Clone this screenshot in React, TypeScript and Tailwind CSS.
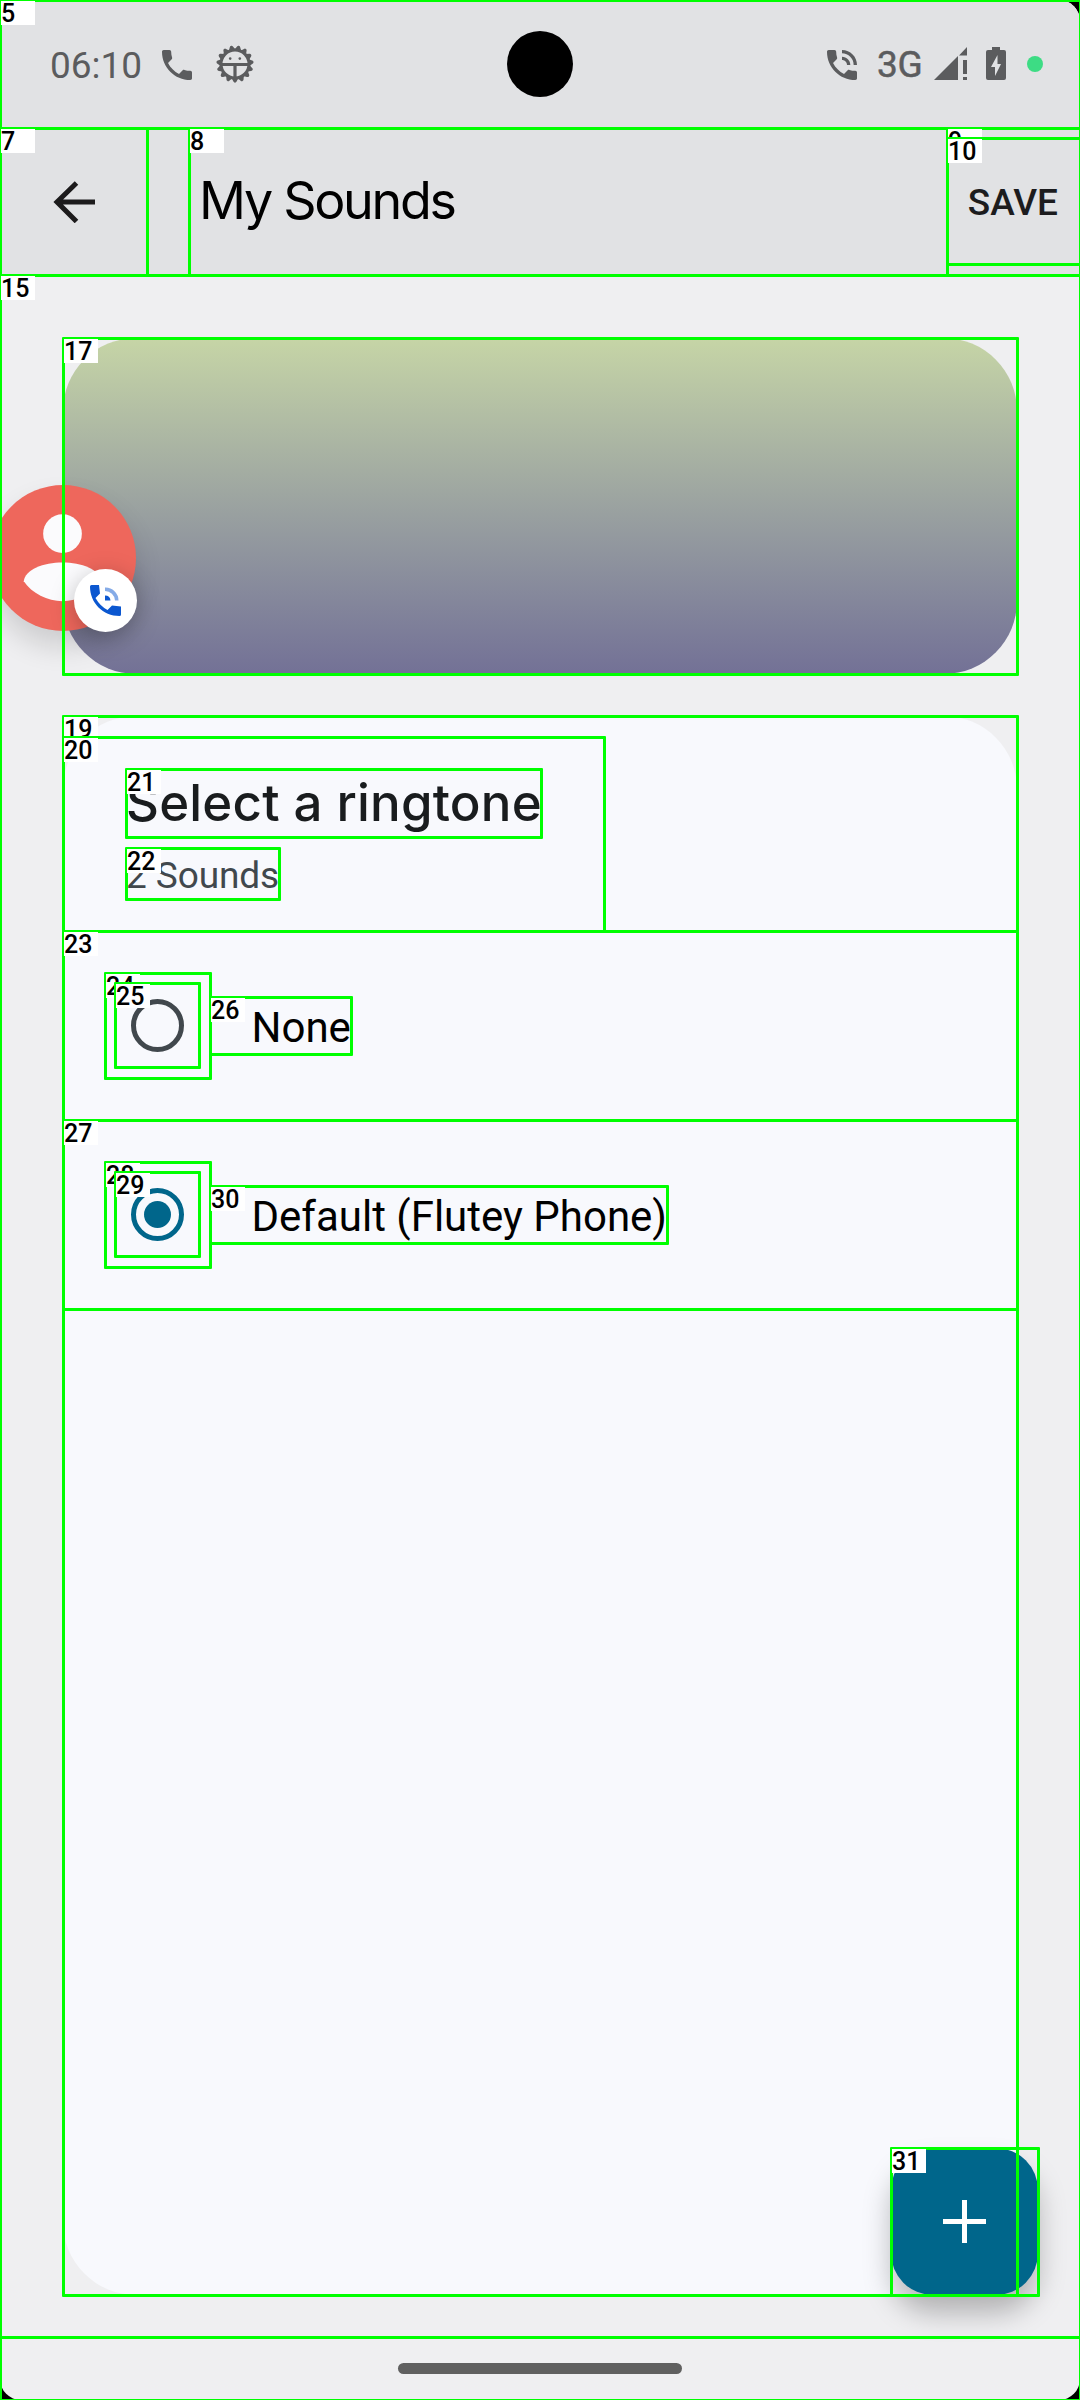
import React from "react";

// [label, left, top, right, bottom] of each annotated view
const BOXES: [number, number, number, number, number][] = [
  [5, 0, 0, 1080, 2400],
  [6, 0, 128, 1080, 275],
  [7, 0, 128, 147, 275],
  [8, 189, 128, 947, 275],
  [9, 947, 128, 1080, 275],
  [10, 947, 138, 1080, 264],
  [15, 0, 275, 1080, 2337],
  [17, 63, 338, 1017, 674],
  [19, 63, 716, 1017, 2295],
  [20, 63, 737, 604, 931],
  [21, 126, 769, 541, 837],
  [22, 126, 848, 279, 899],
  [23, 63, 931, 1017, 1120],
  [24, 105, 973, 210, 1078],
  [25, 115, 983, 199, 1067],
  [26, 210, 997, 351, 1054],
  [27, 63, 1120, 1017, 1309],
  [28, 105, 1162, 210, 1267],
  [29, 115, 1172, 199, 1256],
  [30, 210, 1186, 667, 1243],
  [31, 891, 2148, 1038, 2295],
];

const TEETH = Array.from({ length: 15 }, (_, i) => i * 24);

function Annotations() {
  return (
    <div className="pointer-events-none absolute inset-0 overflow-hidden">
      {BOXES.map(([n, l, t, r, b]) => (
        <div
          key={n}
          className="absolute rounded-[1px] border-[3px] border-[#00ff00]"
          style={{ left: l - 1, top: t - 1, width: r - l + 3, height: b - t + 3 }}
        >
          <span className="absolute top-[-1px] left-[-1px] h-6 w-[34px] bg-white text-[25px] leading-[25px] font-medium text-black">
            {n}
          </span>
        </div>
      ))}
    </div>
  );
}

function BugIcon() {
  return (
    <svg className="ml-[19px] size-[38px]" viewBox="0 0 38 38" fill="currentColor">
      {TEETH.map((a) => (
        <path key={a} d="M15.600 33 L17.400 36.500 a1.700 1.700 0 0 0 3.200 0 L22.400 33 Z" transform={`rotate(${a} 19 19)`} />
      ))}
      <circle cx="19" cy="19" r="14" fill="none" stroke="currentColor" strokeWidth="3" />
      <path d="M6 18h26v3h-11.400v12h-3.200V21H6z" />
      <circle cx="14.200" cy="13.600" r="1.300" />
      <circle cx="23.800" cy="13.600" r="1.300" />
    </svg>
  );
}

function StatusBar() {
  return (
    <div className="relative flex h-32 items-center bg-[#e1e2e4] pl-[50px] text-[#5b5c5e]">
      <span className="mt-1 w-[94px] text-[37px] leading-10">06:10</span>
      <svg className="mt-0.5 ml-[13px] size-10" viewBox="0 0 24 24" fill="currentColor">
        <path d="M20 15.500c-1.250 0-2.450-.2-3.570-.57-.35-.11-.74-.03-1.020.24l-2.200 2.200c-2.830-1.440-5.150-3.750-6.590-6.590l2.200-2.210c.28-.26.36-.65.25-1C8.700 6.450 8.500 5.250 8.500 4c0-.55-.45-1-1-1H4c-.55 0-1 .45-1 1 0 9.390 7.610 17 17 17 .55 0 1-.45 1-1v-3.500c0-.55-.45-1-1-1z" />
      </svg>
      <BugIcon />
      <div className="absolute top-[31px] left-[507px] size-[66px] rounded-full bg-black" />
      <div className="ml-auto flex items-center pr-[37px]">
        <svg className="mt-0.5 size-10" viewBox="0 0 24 24" fill="currentColor">
          <path d="M20 15.500c-1.250 0-2.450-.2-3.570-.57-.35-.11-.74-.03-1.020.24l-2.200 2.200c-2.830-1.440-5.150-3.750-6.590-6.590l2.200-2.210c.28-.26.36-.65.25-1C8.700 6.450 8.500 5.250 8.500 4c0-.55-.45-1-1-1H4c-.55 0-1 .45-1 1 0 9.390 7.610 17 17 17 .55 0 1-.45 1-1v-3.500c0-.55-.45-1-1-1zM19 12h2c0-4.970-4.030-9-9-9v2c3.870 0 7 3.130 7 7zm-4 0h2c0-2.760-2.240-5-5-5v2c1.660 0 3 1.340 3 3z" />
        </svg>
        <span className="mt-px ml-[15px] w-[49px] text-[37px] leading-10 tracking-[-0.2px] [-webkit-text-stroke:0.5px_#5b5c5e]">3G</span>
        <svg className="ml-[8px] h-[34px] w-[33px]" viewBox="0 0 33 34" fill="currentColor">
          <path d="M0 33 24 9V33zM33 0V8.500H25zM29 13h4v14h-4zM29 30h4v3h-4z" />
        </svg>
        <svg className="ml-[19px] h-[34px] w-5" viewBox="0 0 20 34" fill="currentColor">
          <path fillRule="evenodd" d="M6 0h8v3h4q2 0 2 2v26q0 2-2 2H2q-2 0-2-2V5q0-2 2-2h4zM11.500 8 5 20h4v9l6-12h-3.500z" />
        </svg>
        <span className="ml-[21px] size-4 rounded-full bg-[#3ddc84]" />
      </div>
    </div>
  );
}

function Radio({ label, checked }: { label: string; checked?: boolean }) {
  return (
    <div className="flex h-[189px] items-center pl-[67.500px]">
      <span
        className={
          checked
            ? "flex size-[53px] items-center justify-center rounded-full border-[5px] border-[#00668b]"
            : "size-[53px] rounded-full border-[5px] border-[#41484d]"
        }
      >
        {checked && <span className="size-[27px] rounded-full bg-[#00668b]" />}
      </span>
      <span className="mt-[3px] ml-[68px] text-[42px] leading-[49px] whitespace-nowrap text-black">{label}</span>
    </div>
  );
}

function CallBubble() {
  return (
    <div className="absolute top-[485px] left-[-10px] size-[146px] rounded-full bg-[#ee675c] shadow-[0_16px_28px_rgba(0,0,0,0.14)]">
      <svg className="size-full" viewBox="0 0 147 147" fill="#fbfbfd">
        <circle cx="73" cy="49" r="19.500" />
        <path d="M34 97C35 85 54 78 73 78s38 7 39 19c-8 12-24 20-39 20s-31-8-39-20z" />
      </svg>
      <div className="absolute top-[84px] left-[84px] flex size-[63px] items-center justify-center rounded-full bg-white shadow-[0_6px_24px_rgba(0,0,0,0.26)]">
        <svg className="size-[31px]" viewBox="0 0 31 31" fill="#0b57d0">
          <path d="M0 1.500Q0 0 1.500 0H9l1 8.500-4.500 4.500Q10 21 17.500 25l4.500-4.500 9 1V29.500Q31 31 29.500 31C13 31 0 18 0 1.500z" />
          <path d="M15 10.500q5 0 5.500 5H15z" />
          <path d="M15 2.500a13 13 0 0 1 13.500 13h-3.500a10 10 0 0 0-10-9.500z" opacity=".5" />
        </svg>
      </div>
    </div>
  );
}

export default function App() {
  return (
    <div className="h-[2400px] w-[1080px] bg-black font-['Roboto',sans-serif]">
      <div className="relative h-[2400px] w-[1080px]">
        <div className="flex h-full flex-col overflow-hidden rounded-[21px] bg-[#efeff1]">
          <StatusBar />
          <header className="flex h-[147px] items-center bg-[#e1e2e4] pr-[22px] pl-[53px]">
            <svg className="size-[42px]" viewBox="0 0 42 42" fill="none" stroke="#1c1b1c" strokeWidth="5">
              <path d="M42 21H3M23.500 2 4 21 23.500 40.500" />
            </svg>
            <h1 className="mb-0.5 ml-[104px] font-['Inter'] text-[52px] leading-none tracking-[-2.3px] whitespace-nowrap text-black">My Sounds</h1>
            <button className="mt-0.5 ml-auto text-[37px] leading-none font-medium text-[#1c1c1e]">SAVE</button>
          </header>
          <main className="flex flex-1 flex-col gap-[42px] px-[63px] pt-[63px]">
            <div className="h-[336px] rounded-[73px] bg-linear-to-b from-[#c6d5a6] to-[#737196]" />
            <section className="h-[1579px] rounded-[73px] bg-[#f8f9fd] pt-[21px]">
              <div className="h-[194px] pt-8 pl-[63px]">
                <h2 className="font-['Inter'] text-[51px] leading-[68px] font-medium tracking-[0.2px] whitespace-nowrap text-[#191c1e]">Select a ringtone</h2>
                <p className="mt-[13px] text-[37px] leading-[51px] tracking-[-0.1px] text-[#41484d]">2 Sounds</p>
              </div>
              <Radio label="None" />
              <Radio label="Default (Flutey Phone)" checked />
            </section>
          </main>
          <footer className="flex h-[63px] items-center justify-center">
            <div className="h-[11px] w-[284px] rounded-full bg-[#606060]" />
          </footer>
        </div>
        <CallBubble />
        <button className="absolute top-[2148px] left-[891px] flex size-[147px] items-center justify-center rounded-[42px] bg-[#00668b] shadow-[0_18px_28px_rgba(0,0,0,0.26)]">
          <svg className="size-[43px]" viewBox="0 0 43 43" fill="#fff">
            <path d="M19 0h5v19h19v5H24v19h-5V24H0v-5h19z" />
          </svg>
        </button>
        <Annotations />
      </div>
    </div>
  );
}
